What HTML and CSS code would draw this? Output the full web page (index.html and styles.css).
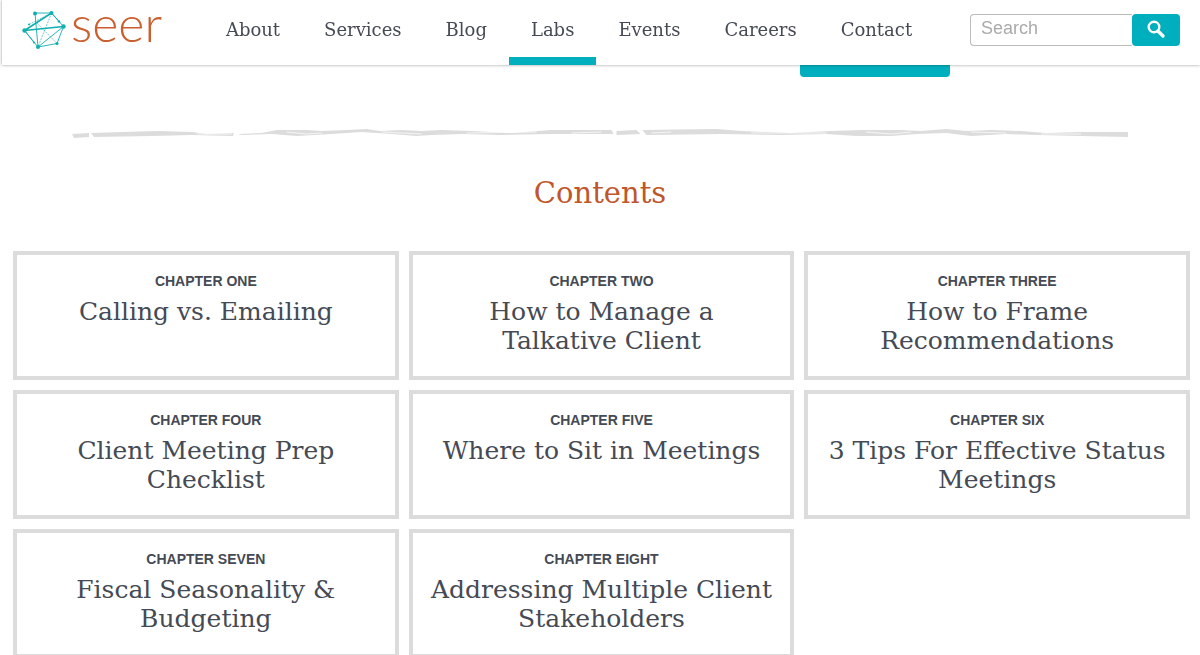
FILE: index.html
```html
<!DOCTYPE html>
<html lang="en">
<head>
<meta charset="UTF-8">
<meta name="viewport" content="width=device-width, initial-scale=1.0">
<title>Seer Labs</title>
<link rel="stylesheet" href="styles.css">
</head>
<body>
<header class="site-header">
  <a class="logo" href="#">
    <svg class="logo-mark" viewBox="0 0 44 40" aria-hidden="true">
      <g fill="none" stroke="#12aeb0" stroke-width="0.9">
        <path d="M13 4H29.500L41.500 17.500L35 34.500L16 38"/>
        <path d="M2.500 21.500L12 33.500M2.500 21.500L16 38M13 4L16 38M41.500 17.500L16 38M29.500 4L37 12.500"/>
        <path d="M7 15.500L29.500 4M29.500 4L16 38M13 12L35 34.500" stroke-dasharray="2 1" stroke-width="0.6"/>
        <path d="M2.500 21.500L29.500 4M2.500 21.500L41.500 17.500" stroke-width="1.500"/>
      </g>
      <g fill="#12aeb0">
        <circle cx="13" cy="4.500" r="2"/>
        <circle cx="29.500" cy="4" r="2"/>
        <circle cx="41.500" cy="17.500" r="2.200"/>
        <circle cx="35" cy="34.500" r="1.600"/>
        <circle cx="16" cy="38" r="2"/>
        <circle cx="2.500" cy="21.500" r="2.200"/>
        <circle cx="7" cy="15.500" r="1"/>
        <circle cx="37" cy="12.500" r="1.200"/>
        <circle cx="12" cy="33.500" r="1"/>
      </g>
    </svg>
    <span class="logo-text">seer</span>
  </a>
  <nav class="main-nav">
    <a href="#">About</a>
    <a href="#">Services</a>
    <a href="#">Blog</a>
    <a class="active" href="#">Labs</a>
    <a href="#">Events</a>
    <a href="#">Careers</a>
    <a href="#">Contact</a>
  </nav>
  <form class="search">
    <input type="text" placeholder="Search" aria-label="Search">
    <button type="submit" aria-label="Submit search">
      <svg viewBox="0 0 18 18" aria-hidden="true">
        <circle cx="7" cy="7" r="5.300" fill="none" stroke="#fff" stroke-width="2.400"/>
        <path d="M11 11L16 16" stroke="#fff" stroke-width="3.200" stroke-linecap="round"/>
      </svg>
    </button>
  </form>
</header>

<main>
  <div class="intro">
    <button class="cta" type="button" aria-label="Download"></button>
  </div>

  <svg class="divider" viewBox="0 0 1057 12" preserveAspectRatio="none" aria-hidden="true">
    <g fill="#dcdcdc">
      <path d="M0 6L17 5L17 9L2 10Z"/>
      <path d="M19 5L50 4L85 3L120 4L135 6L162 5L161 8L120 7L80 8L22 9Z"/>
      <path d="M166 6L190 5L205 2L235 2L250 3L275 2L295 1L308 3L330 2L350 3L370 2L400 3L440 5L480 2L540 2L542 6L480 6L430 7L390 6L360 7L345 8L320 6L290 4L260 6L225 8L200 6L170 7Z"/>
      <path d="M545 3L565 2L569 6L545 7Z"/>
      <path d="M571 2L645 1L670 3L720 5L760 3L790 2L830 2L850 3L875 1L895 3L920 2L950 3L975 5L1010 4L1057 4L1057 9L1010 8L965 7L935 6L900 8L875 5L845 6L820 8L785 8L755 6L710 7L650 6L575 7Z"/>
    </g>
    <g fill="none" stroke="#fff" stroke-width="0.7">
      <path d="M125 6H160M215 4L235 6L250 5M310 4L350 6M395 5L465 4M500 5L530 4M580 5L600 4M680 5L755 5M795 4L820 6L840 4M900 4L935 5M970 6H1010"/>
    </g>
  </svg>

  <h1>Contents</h1>

  <div class="chapters">
    <a class="chapter" href="#"><h2>Chapter One</h2><p>Calling vs. Emailing</p></a>
    <a class="chapter" href="#"><h2>Chapter Two</h2><p>How to Manage a Talkative Client</p></a>
    <a class="chapter" href="#"><h2>Chapter Three</h2><p>How to Frame Recommendations</p></a>
    <a class="chapter" href="#"><h2>Chapter Four</h2><p>Client Meeting Prep Checklist</p></a>
    <a class="chapter" href="#"><h2>Chapter Five</h2><p>Where to Sit in Meetings</p></a>
    <a class="chapter" href="#"><h2>Chapter Six</h2><p>3 Tips For Effective Status Meetings</p></a>
    <a class="chapter" href="#"><h2>Chapter Seven</h2><p>Fiscal Seasonality &amp; Budgeting</p></a>
    <a class="chapter" href="#"><h2>Chapter Eight</h2><p>Addressing Multiple Client Stakeholders</p></a>
  </div>
</main>
</body>
</html>
```
FILE: styles.css
```css
* {
  box-sizing: border-box;
}
body {
  margin: 0;
  background-color: #fff;
  color: #454a54;
  font-family: "DejaVu Serif", serif;
}
a {
  color: inherit;
  text-decoration: none;
}
.site-header {
  position: fixed;
  top: 0;
  left: 2px;
  right: 0;
  z-index: 10;
  display: flex;
  justify-content: space-between;
  height: 65px;
  padding: 0 20px;
  background-color: #fff;
  box-shadow: 0 0 3px rgba(0, 0, 0, 0.4);
}
.logo {
  display: flex;
  align-items: flex-start;
  gap: 5px;
}
.logo-mark {
  width: 44px;
  height: 40px;
  margin-top: 9px;
}
.logo-text {
  color: #cb5f2e;
  font-family: Lato, sans-serif;
  font-size: 50px;
  font-weight: 300;
  line-height: 46px;
}
.main-nav {
  display: flex;
  margin-left: 6px;
}
.main-nav a {
  padding: 2px 22px 0;
  border-bottom: 8px solid transparent;
  font-size: 18px;
  line-height: 55px;
}
.main-nav .active {
  border-bottom-color: #00afbd;
}
.search {
  display: flex;
  height: 32px;
  margin-top: 14px;
}
.search input {
  width: 162px;
  padding: 0 10px 4px;
  border: 1px solid #bbb;
  border-right: 0;
  border-radius: 4px 0 0 4px;
  font-family: "Liberation Sans", Arial, sans-serif;
  font-size: 18px;
}
.search input::placeholder {
  color: #aaa;
}
.search button {
  display: flex;
  align-items: center;
  justify-content: center;
  width: 48px;
  padding: 0;
  border: 0;
  border-radius: 4px;
  background-color: #00afbd;
}
.search svg {
  width: 18px;
  height: 18px;
  margin-bottom: 3px;
}
.intro {
  display: flex;
  justify-content: flex-end;
  padding: 32px 20% 0 0;
}
.cta {
  width: 150px;
  height: 45px;
  margin-right: 10px;
  border: 0;
  border-radius: 4px;
  background-color: #00afbd;
}
.divider {
  display: block;
  width: 88%;
  height: 12px;
  margin: 51px auto 0 6%;
}
h1 {
  margin: 33px 0 37px;
  color: #c0562b;
  font-size: 29px;
  font-weight: normal;
  line-height: 41px;
  text-align: center;
}
.chapters {
  display: grid;
  grid-template-columns: repeat(3, 1fr);
  gap: 10px;
  padding: 0 10px 0 13px;
}
.chapter {
  padding: 16px 17px 21px;
  border: 4px solid #dcdcdc;
  text-align: center;
}
.chapter h2 {
  margin: 0 0 6px;
  font-family: "Liberation Sans", Arial, sans-serif;
  font-size: 14px;
  font-weight: bold;
  line-height: 20px;
  text-transform: uppercase;
}
.chapter p {
  min-height: 58px;
  margin: 0;
  font-size: 25px;
  line-height: 29px;
}
```
